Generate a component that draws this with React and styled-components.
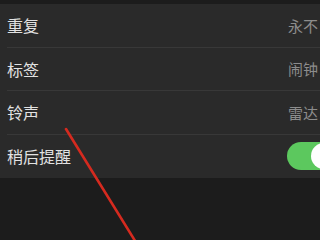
import React from 'react'
import styled, { createGlobalStyle } from 'styled-components'

const Global = createGlobalStyle`
  html, body {
    margin: 0;
    padding: 0;
    background: #1c1c1c;
    overflow: hidden;
  }
  body {
    width: 320px;
    height: 240px;
    font-family: "Noto Sans CJK SC", "Noto Sans", sans-serif;
  }
`

const Screen = styled.div`
  position: relative;
  width: 320px;
  height: 240px;
  overflow: hidden;
  padding-top: 4px;
  box-sizing: border-box;
`

const List = styled.div`
  width: 345px;
  background: #2a2a2a;
  padding-left: 7px;
  box-sizing: border-box;
`

const Row = styled.div`
  display: flex;
  align-items: center;
  height: 43.5px;
  box-sizing: border-box;
  padding-right: ${p => (p.$switch ? '7px' : '27px')};
  border-bottom: ${p => (p.$last ? 'none' : '1px solid #383838')};
`

const Label = styled.div`
  flex: 1;
  font-size: 16px;
  color: #e2e2e2;
  line-height: 1;
`

const Value = styled.div`
  font-size: 15px;
  color: #8c8c8c;
  line-height: 1;
`

const Switch = styled.div`
  width: 51px;
  height: 28px;
  border-radius: 14px;
  background: #5cc85e;
  display: flex;
  align-items: center;
  justify-content: flex-end;
  padding: 1px;
  box-sizing: border-box;
`

const Knob = styled.div`
  width: 26px;
  height: 26px;
  border-radius: 50%;
  background: #ffffff;
`

const Arrow = styled.svg`
  position: absolute;
  left: 0;
  top: 0;
  pointer-events: none;
`

export default function App() {
  return (
    <Screen>
      <Global />
      <List>
        <Row><Label>重复</Label><Value>永不</Value></Row>
        <Row><Label>标签</Label><Value>闹钟</Value></Row>
        <Row><Label>铃声</Label><Value>雷达</Value></Row>
        <Row $switch $last><Label>稍后提醒</Label><Switch><Knob /></Switch></Row>
      </List>
      <Arrow width="320" height="240" viewBox="0 0 320 240">
        <line x1="66" y1="129" x2="137" y2="244" stroke="#d52a1f" strokeWidth="2.6" strokeLinecap="round" />
      </Arrow>
    </Screen>
  )
}
